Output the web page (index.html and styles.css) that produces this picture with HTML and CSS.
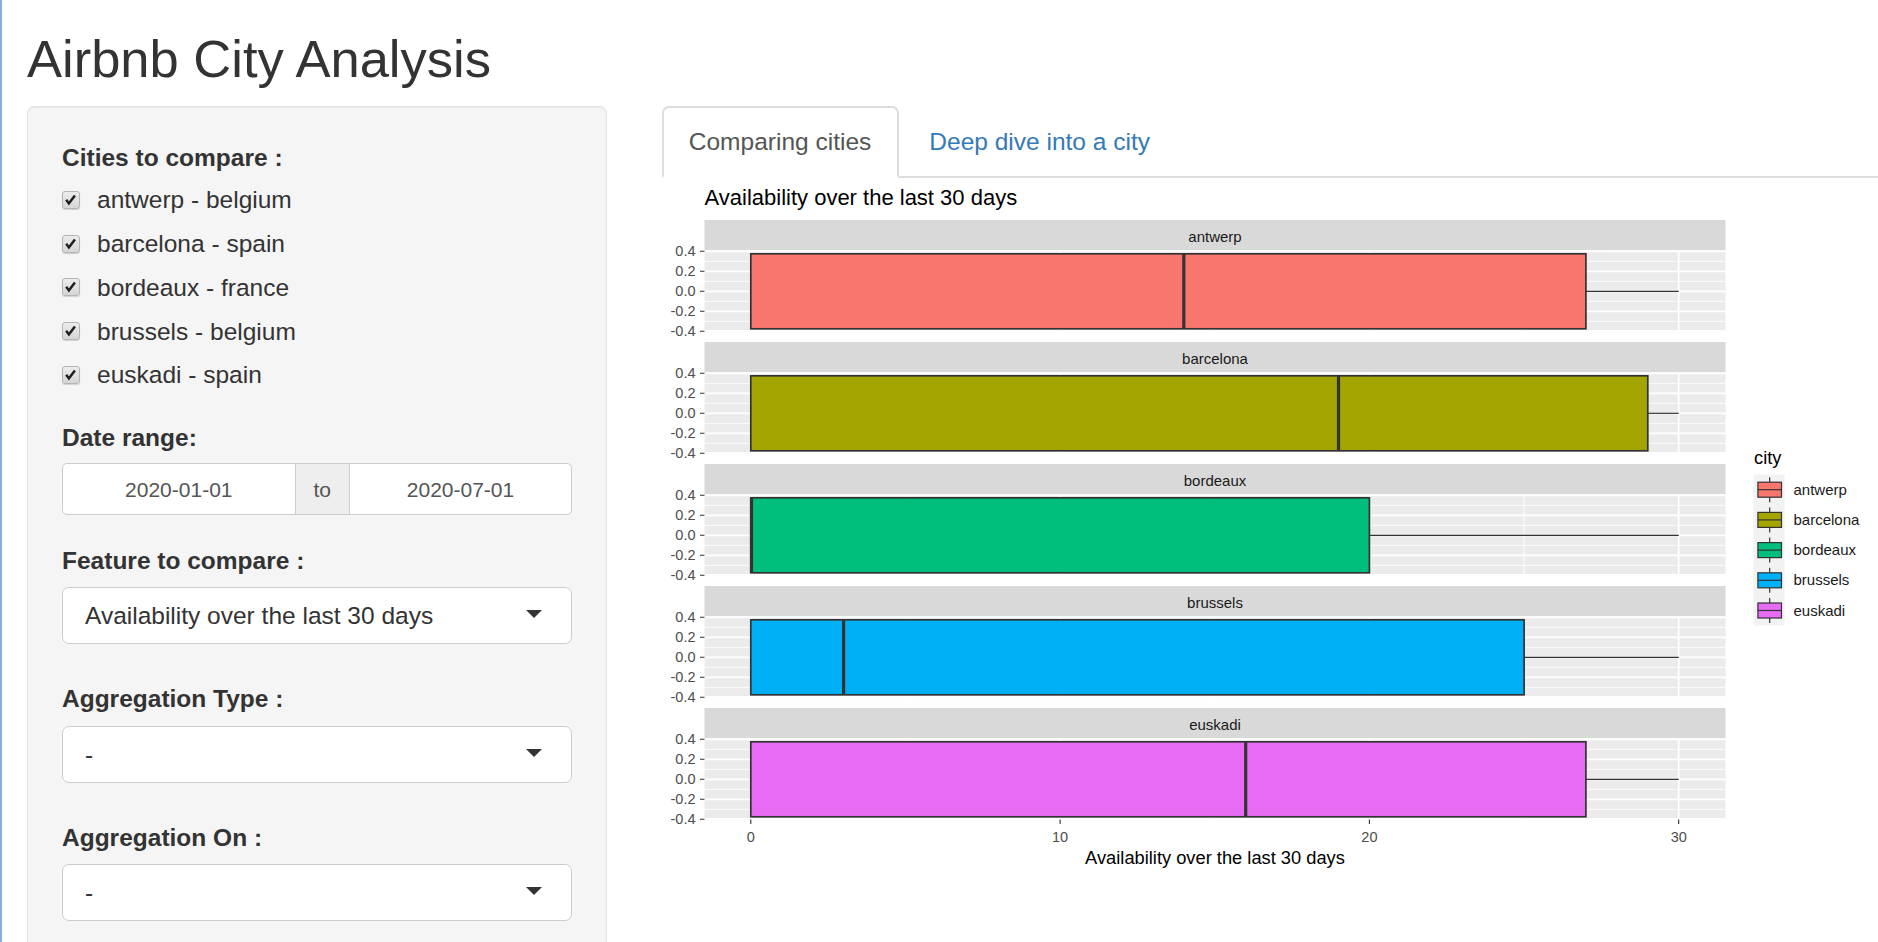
FILE: index.html
```html
<!DOCTYPE html>
<html lang="en">
<head>
<meta charset="utf-8">
<title>Airbnb City Analysis</title>
<link rel="stylesheet" href="styles.css">
</head>
<body>
<div class="container">
  <h2 class="page-title">Airbnb City Analysis</h2>
  <div class="layout">
    <aside class="sidebar">
      <div class="form-group group-checks">
        <label class="control-label">Cities to compare :</label>
        <div class="options">
          <label class="check"><span class="cb"><svg viewBox="0 0 18 18" width="16" height="16"><path class="cb-mark" d="M3.6 8.8 L6.6 12.8 L13.4 3.8"/></svg></span><span>antwerp - belgium</span></label>
          <label class="check"><span class="cb"><svg viewBox="0 0 18 18" width="16" height="16"><path class="cb-mark" d="M3.6 8.8 L6.6 12.8 L13.4 3.8"/></svg></span><span>barcelona - spain</span></label>
          <label class="check"><span class="cb"><svg viewBox="0 0 18 18" width="16" height="16"><path class="cb-mark" d="M3.6 8.8 L6.6 12.8 L13.4 3.8"/></svg></span><span>bordeaux - france</span></label>
          <label class="check"><span class="cb"><svg viewBox="0 0 18 18" width="16" height="16"><path class="cb-mark" d="M3.6 8.8 L6.6 12.8 L13.4 3.8"/></svg></span><span>brussels - belgium</span></label>
          <label class="check"><span class="cb"><svg viewBox="0 0 18 18" width="16" height="16"><path class="cb-mark" d="M3.6 8.8 L6.6 12.8 L13.4 3.8"/></svg></span><span>euskadi - spain</span></label>
        </div>
      </div>

      <div class="form-group group-date">
        <label class="control-label">Date range:</label>
        <div class="daterange">
          <div class="date-input date-start">2020-01-01</div>
          <div class="date-addon">to</div>
          <div class="date-input date-end">2020-07-01</div>
        </div>
      </div>

      <div class="form-group group-select">
        <label class="control-label">Feature to compare :</label>
        <div class="select"><span class="select-text">Availability over the last 30 days</span><span class="caret"></span></div>
      </div>

      <div class="form-group group-select">
        <label class="control-label">Aggregation Type :</label>
        <div class="select"><span class="select-text">-</span><span class="caret"></span></div>
      </div>

      <div class="form-group group-select">
        <label class="control-label">Aggregation On :</label>
        <div class="select"><span class="select-text">-</span><span class="caret"></span></div>
      </div>
    </aside>

    <main class="main">
      <ul class="tabs">
        <li><a class="tab active" href="#">Comparing cities</a></li>
        <li><a class="tab" href="#">Deep dive into a city</a></li>
      </ul>

      <svg class="plot" width="1216.5" height="700" viewBox="661.5 178 1216.5 700">
        <text class="plot-title" x="704" y="205">Availability over the last 30 days</text>

        <!-- antwerp -->
        <g transform="translate(0,220)">
          <rect class="strip" x="704" y="0" width="1021" height="30"/>
          <text class="strip-text" x="1214.5" y="21.5">antwerp</text>
          <rect class="panel-bg" x="704" y="30.5" width="1021" height="81"/>
          <path class="grid-minor" d="M704 41.3H1725M704 61.3H1725M704 81.3H1725M704 101.3H1725M905 30.5V111.5M1214.3 30.5V111.5M1523.6 30.5V111.5"/>
          <path class="grid-major" d="M704 31.3H1725M704 51.3H1725M704 71.3H1725M704 91.3H1725M704 110.8H1725M750.3 30.5V111.5M1059.6 30.5V111.5M1368.9 30.5V111.5M1678.2 30.5V111.5"/>
          <path class="whisker" d="M1585.4 71.3H1678.2"/>
          <rect class="box fill-antwerp" x="750.3" y="33.8" width="835.1" height="75"/>
          <path class="median" d="M1183.3 33.8V108.8"/>
          <path class="tick" d="M699.5 31.3H704M699.5 51.3H704M699.5 71.3H704M699.5 91.3H704M699.5 111.3H704"/>
          <text class="ytick" x="695" y="36.3">0.4</text>
          <text class="ytick" x="695" y="56.3">0.2</text>
          <text class="ytick" x="695" y="76.3">0.0</text>
          <text class="ytick" x="695" y="96.3">-0.2</text>
          <text class="ytick" x="695" y="116.3">-0.4</text>
        </g>

        <!-- barcelona -->
        <g transform="translate(0,342)">
          <rect class="strip" x="704" y="0" width="1021" height="30"/>
          <text class="strip-text" x="1214.5" y="21.5">barcelona</text>
          <rect class="panel-bg" x="704" y="30.5" width="1021" height="81"/>
          <path class="grid-minor" d="M704 41.3H1725M704 61.3H1725M704 81.3H1725M704 101.3H1725M905 30.5V111.5M1214.3 30.5V111.5M1523.6 30.5V111.5"/>
          <path class="grid-major" d="M704 31.3H1725M704 51.3H1725M704 71.3H1725M704 91.3H1725M704 110.8H1725M750.3 30.5V111.5M1059.6 30.5V111.5M1368.9 30.5V111.5M1678.2 30.5V111.5"/>
          <path class="whisker" d="M1647.3 71.3H1678.2"/>
          <rect class="box fill-barcelona" x="750.3" y="33.8" width="897" height="75"/>
          <path class="median" d="M1338 33.8V108.8"/>
          <path class="tick" d="M699.5 31.3H704M699.5 51.3H704M699.5 71.3H704M699.5 91.3H704M699.5 111.3H704"/>
          <text class="ytick" x="695" y="36.3">0.4</text>
          <text class="ytick" x="695" y="56.3">0.2</text>
          <text class="ytick" x="695" y="76.3">0.0</text>
          <text class="ytick" x="695" y="96.3">-0.2</text>
          <text class="ytick" x="695" y="116.3">-0.4</text>
        </g>

        <!-- bordeaux -->
        <g transform="translate(0,464)">
          <rect class="strip" x="704" y="0" width="1021" height="30"/>
          <text class="strip-text" x="1214.5" y="21.5">bordeaux</text>
          <rect class="panel-bg" x="704" y="30.5" width="1021" height="81"/>
          <path class="grid-minor" d="M704 41.3H1725M704 61.3H1725M704 81.3H1725M704 101.3H1725M905 30.5V111.5M1214.3 30.5V111.5M1523.6 30.5V111.5"/>
          <path class="grid-major" d="M704 31.3H1725M704 51.3H1725M704 71.3H1725M704 91.3H1725M704 110.8H1725M750.3 30.5V111.5M1059.6 30.5V111.5M1368.9 30.5V111.5M1678.2 30.5V111.5"/>
          <path class="whisker" d="M1368.9 71.3H1678.2"/>
          <rect class="box fill-bordeaux" x="750.3" y="33.8" width="618.6" height="75"/>
          <path class="median" d="M751 33.8V108.8"/>
          <path class="tick" d="M699.5 31.3H704M699.5 51.3H704M699.5 71.3H704M699.5 91.3H704M699.5 111.3H704"/>
          <text class="ytick" x="695" y="36.3">0.4</text>
          <text class="ytick" x="695" y="56.3">0.2</text>
          <text class="ytick" x="695" y="76.3">0.0</text>
          <text class="ytick" x="695" y="96.3">-0.2</text>
          <text class="ytick" x="695" y="116.3">-0.4</text>
        </g>

        <!-- brussels -->
        <g transform="translate(0,586)">
          <rect class="strip" x="704" y="0" width="1021" height="30"/>
          <text class="strip-text" x="1214.5" y="21.5">brussels</text>
          <rect class="panel-bg" x="704" y="30.5" width="1021" height="81"/>
          <path class="grid-minor" d="M704 41.3H1725M704 61.3H1725M704 81.3H1725M704 101.3H1725M905 30.5V111.5M1214.3 30.5V111.5M1523.6 30.5V111.5"/>
          <path class="grid-major" d="M704 31.3H1725M704 51.3H1725M704 71.3H1725M704 91.3H1725M704 110.8H1725M750.3 30.5V111.5M1059.6 30.5V111.5M1368.9 30.5V111.5M1678.2 30.5V111.5"/>
          <path class="whisker" d="M1523.6 71.3H1678.2"/>
          <rect class="box fill-brussels" x="750.3" y="33.8" width="773.3" height="75"/>
          <path class="median" d="M843.1 33.8V108.8"/>
          <path class="tick" d="M699.5 31.3H704M699.5 51.3H704M699.5 71.3H704M699.5 91.3H704M699.5 111.3H704"/>
          <text class="ytick" x="695" y="36.3">0.4</text>
          <text class="ytick" x="695" y="56.3">0.2</text>
          <text class="ytick" x="695" y="76.3">0.0</text>
          <text class="ytick" x="695" y="96.3">-0.2</text>
          <text class="ytick" x="695" y="116.3">-0.4</text>
        </g>

        <!-- euskadi -->
        <g transform="translate(0,708)">
          <rect class="strip" x="704" y="0" width="1021" height="30"/>
          <text class="strip-text" x="1214.5" y="21.5">euskadi</text>
          <rect class="panel-bg" x="704" y="30.5" width="1021" height="81"/>
          <path class="grid-minor" d="M704 41.3H1725M704 61.3H1725M704 81.3H1725M704 101.3H1725M905 30.5V111.5M1214.3 30.5V111.5M1523.6 30.5V111.5"/>
          <path class="grid-major" d="M704 31.3H1725M704 51.3H1725M704 71.3H1725M704 91.3H1725M704 110.8H1725M750.3 30.5V111.5M1059.6 30.5V111.5M1368.9 30.5V111.5M1678.2 30.5V111.5"/>
          <path class="whisker" d="M1585.4 71.3H1678.2"/>
          <rect class="box fill-euskadi" x="750.3" y="33.8" width="835.1" height="75"/>
          <path class="median" d="M1245.2 33.8V108.8"/>
          <path class="tick" d="M699.5 31.3H704M699.5 51.3H704M699.5 71.3H704M699.5 91.3H704M699.5 111.3H704"/>
          <text class="ytick" x="695" y="36.3">0.4</text>
          <text class="ytick" x="695" y="56.3">0.2</text>
          <text class="ytick" x="695" y="76.3">0.0</text>
          <text class="ytick" x="695" y="96.3">-0.2</text>
          <text class="ytick" x="695" y="116.3">-0.4</text>
        </g>

        <!-- x axis -->
        <path class="tick" d="M750.3 819.5V824M1059.6 819.5V824M1368.9 819.5V824M1678.2 819.5V824"/>
        <text class="xtick" x="750.3" y="841.5">0</text>
        <text class="xtick" x="1059.6" y="841.5">10</text>
        <text class="xtick" x="1368.9" y="841.5">20</text>
        <text class="xtick" x="1678.2" y="841.5">30</text>
        <text class="axis-title" x="1214.5" y="864.3">Availability over the last 30 days</text>

        <!-- legend -->
        <text class="legend-title" x="1753.5" y="463.5">city</text>
        <rect class="legend-bg" x="1753" y="474.5" width="31" height="151"/>

        <path class="whisker" d="M1769.2 477.2V482.2M1769.2 497.2V502.2"/>
        <rect class="legend-box fill-antwerp" x="1757.4" y="482.2" width="23.6" height="15"/>
        <path class="whisker" d="M1757.4 489.7H1781"/>
        <text class="legend-label" x="1793" y="494.7">antwerp</text>

        <path class="whisker" d="M1769.2 507.4V512.4M1769.2 527.4V532.4"/>
        <rect class="legend-box fill-barcelona" x="1757.4" y="512.4" width="23.6" height="15"/>
        <path class="whisker" d="M1757.4 519.9H1781"/>
        <text class="legend-label" x="1793" y="524.9">barcelona</text>

        <path class="whisker" d="M1769.2 537.6V542.6M1769.2 557.6V562.6"/>
        <rect class="legend-box fill-bordeaux" x="1757.4" y="542.6" width="23.6" height="15"/>
        <path class="whisker" d="M1757.4 550.1H1781"/>
        <text class="legend-label" x="1793" y="555.1">bordeaux</text>

        <path class="whisker" d="M1769.2 567.8V572.8M1769.2 587.8V592.8"/>
        <rect class="legend-box fill-brussels" x="1757.4" y="572.8" width="23.6" height="15"/>
        <path class="whisker" d="M1757.4 580.3H1781"/>
        <text class="legend-label" x="1793" y="585.3">brussels</text>

        <path class="whisker" d="M1769.2 598V603M1769.2 618V623"/>
        <rect class="legend-box fill-euskadi" x="1757.4" y="603" width="23.6" height="15"/>
        <path class="whisker" d="M1757.4 610.5H1781"/>
        <text class="legend-label" x="1793" y="615.5">euskadi</text>
      </svg>
    </main>
  </div>
</div>
</body>
</html>
```

FILE: styles.css
```css
html {
  overflow: hidden;
}

html, body {
  margin: 0;
  padding: 0;
}

*, *::before, *::after {
  box-sizing: border-box;
}

body {
  font-family: "Liberation Sans", Arial, Helvetica, sans-serif;
  font-size: 24.5px;
  line-height: 35px;
  color: #333;
  background: #fff;
  border-left: 2px solid #86aee6;
  min-height: 100vh;
}

.container {
  padding-left: 25px;
}

.page-title {
  font-size: 52.5px;
  font-weight: 400;
  line-height: 57.75px;
  margin: 30.2px 0 18px;
  color: #333;
}

.layout {
  display: flex;
  align-items: flex-start;
}

/* ---------- sidebar ---------- */
.sidebar {
  flex: none;
  width: 580px;
  background: #f5f5f5;
  border: 1px solid #e3e3e3;
  border-radius: 7px;
  padding: 33px 34px;
  box-shadow: inset 0 1px 1px rgba(0, 0, 0, 0.05);
}

.control-label {
  display: block;
  font-weight: 700;
  line-height: 35px;
  margin-bottom: 9.5px;
}

.group-checks {
  margin-bottom: 28px;
}

.group-checks .control-label {
  margin-bottom: 7.5px;
}

.options {
  display: flex;
  flex-direction: column;
  gap: 8.75px;
}

.check {
  display: flex;
  align-items: center;
  height: 35px;
  font-weight: 400;
}

.cb {
  flex: none;
  width: 18px;
  height: 18px;
  margin-right: 17px;
  border: 1px solid #b4b4b4;
  border-radius: 3px;
  background: linear-gradient(#ececec, #d6d6d6);
  box-shadow: 0 1px 1px rgba(0, 0, 0, 0.15);
  display: flex;
  align-items: center;
  justify-content: center;
}

.cb svg {
  display: block;
}

.cb-mark {
  fill: none;
  stroke: #1f1f1f;
  stroke-width: 2.8;
  stroke-linejoin: miter;
}

.group-date {
  margin-bottom: 28px;
}

.group-date .control-label {
  margin-bottom: 8px;
}

.daterange {
  display: flex;
  height: 51.5px;
  border: 1px solid #ccc;
  border-radius: 5px;
  background: #fff;
  font-size: 21px;
  color: #555;
  overflow: hidden;
}

.date-input,
.date-addon {
  display: flex;
  align-items: center;
  justify-content: center;
}

.date-start {
  width: 231.6px;
}

.date-addon {
  width: 55.4px;
  background: #eee;
  border-left: 1px solid #ccc;
  border-right: 1px solid #ccc;
}

.date-end {
  flex: 1;
}

.group-select {
  margin-bottom: 37px;
}

.select {
  display: flex;
  align-items: center;
  height: 57px;
  border: 1px solid #ccc;
  border-radius: 7px;
  background: #fff;
  padding: 0 29.5px 0 22px;
  color: #333;
}

.caret {
  margin-left: auto;
  margin-top: -3px;
  width: 0;
  height: 0;
  border-style: solid;
  border-width: 8.75px 8.75px 0 8.75px;
  border-color: #333 transparent transparent transparent;
}

/* ---------- main ---------- */
.main {
  flex: 1;
  min-width: 0;
  margin-left: 54.5px;
}

.tabs {
  display: flex;
  list-style: none;
  margin: 0;
  padding: 0;
  border-bottom: 2px solid #ddd;
}

.tabs li {
  margin-bottom: -2px;
  margin-right: 3.5px;
}

.tab {
  display: block;
  padding: 16.5px 25.3px;
  line-height: 35px;
  border: 2px solid transparent;
  border-radius: 7px 7px 0 0;
  color: #337ab7;
  text-decoration: none;
}

.tab.active {
  color: #555;
  background: #fff;
  border-color: #ddd #ddd transparent #ddd;
}

/* ---------- plot ---------- */
.plot {
  display: block;
  font-family: "Liberation Sans", Arial, sans-serif;
}

.plot-title {
  font-size: 22px;
  fill: #000;
}

.strip {
  fill: #d9d9d9;
}

.strip-text {
  font-size: 15px;
  fill: #1a1a1a;
  text-anchor: middle;
}

.panel-bg {
  fill: #ebebeb;
}

.grid-minor {
  fill: none;
  stroke: #fff;
  stroke-width: 0.9;
}

.grid-major {
  fill: none;
  stroke: #fff;
  stroke-width: 1.7;
}

.whisker {
  fill: none;
  stroke: #333;
  stroke-width: 1.2;
}

.box {
  stroke: #333;
  stroke-width: 1.7;
}

.median {
  fill: none;
  stroke: #333;
  stroke-width: 3.2;
}

.tick {
  fill: none;
  stroke: #333;
  stroke-width: 1.1;
}

.ytick {
  font-size: 14.5px;
  fill: #4d4d4d;
  text-anchor: end;
}

.xtick {
  font-size: 14.5px;
  fill: #4d4d4d;
  text-anchor: middle;
}

.axis-title {
  font-size: 18.3px;
  fill: #000;
  text-anchor: middle;
}

.legend-title {
  font-size: 18.3px;
  fill: #000;
}

.legend-bg {
  fill: #f2f2f2;
}

.legend-box {
  stroke: #333;
  stroke-width: 1.2;
}

.legend-label {
  font-size: 15px;
  fill: #1a1a1a;
}

.fill-antwerp { fill: #f8766d; }
.fill-barcelona { fill: #a3a500; }
.fill-bordeaux { fill: #00bf7d; }
.fill-brussels { fill: #00b0f6; }
.fill-euskadi { fill: #e76bf3; }
```
